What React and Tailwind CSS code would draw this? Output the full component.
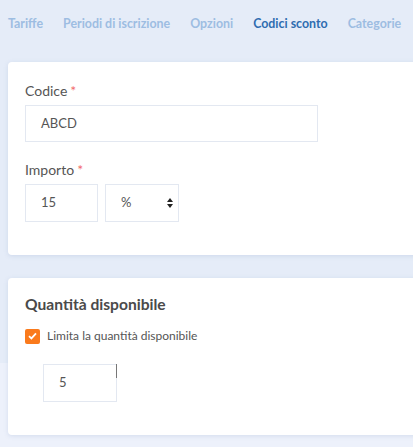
import React from "react";

const tabs = ["Tariffe", "Periodi di iscrizione", "Opzioni", "Codici sconto", "Categorie"];

function Label({ children }) {
  return (
    <div className="text-[14px] leading-5 text-[#555]">
      {children}
      <span className="text-[#f26b6b] ml-[3px]">*</span>
    </div>
  );
}

export default function App() {
  return (
    <div
      className="h-[447px] w-[413px] overflow-hidden bg-[linear-gradient(#e5ecf8_363px,#edf1fb_363px)]"
      style={{ fontFamily: "Lato, 'Noto Sans', sans-serif" }}
    >
      {/* tab bar */}
      <div className="flex items-center h-[48px] pl-[8px] gap-[20px] text-[12.4px] font-bold whitespace-nowrap">
        {tabs.map((t) => (
          <span key={t} className={t === "Codici sconto" ? "text-[#2f6cb0]" : "text-[#9dbde2]"}>
            {t}
          </span>
        ))}
      </div>

      {/* card Codice / Importo */}
      <div className="ml-[8px] mt-[14px] w-[430px] bg-white rounded-[4px] shadow-[0_1px_4px_rgba(140,160,200,0.25)] pl-[17px] pt-[19px] pb-[33px]">
        <Label>Codice</Label>
        <div className="mt-[4px] w-[293px] h-[37px] border border-[#e3e8f1] flex items-center pl-[15px] text-[13px] text-[#555]">
          ABCD
        </div>
        <div className="mt-[18px]">
          <Label>Importo</Label>
        </div>
        <div className="mt-[4px] flex gap-[7px]">
          <div className="w-[73px] h-[38px] border border-[#e3e8f1] flex items-center pl-[15px] text-[13px] text-[#555]">
            15
          </div>
          <div className="w-[74px] h-[38px] border border-[#e3e8f1] flex items-center justify-between pl-[15px] pr-[5px] text-[13px] text-[#555]">
            <span>%</span>
            <svg width="6" height="10" viewBox="0 0 6 10">
              <path d="M3 0L6 4H0Z" fill="#222" />
              <path d="M3 10L6 6H0Z" fill="#222" />
            </svg>
          </div>
        </div>
      </div>

      {/* card Quantità */}
      <div className="ml-[8px] mt-[23px] w-[430px] bg-white rounded-[4px] shadow-[0_1px_4px_rgba(140,160,200,0.25)] pl-[17px] pt-[15px] pb-[33px]">
        <div className="text-[15.6px] leading-[22px] font-bold text-[#4a4a4a]">Quantità disponibile</div>
        <div className="mt-[12px] flex items-center gap-[7px]">
          <span className="w-[15px] h-[15px] rounded-[2px] bg-[#fa7a1c] flex items-center justify-center">
            <svg width="9" height="8" viewBox="0 0 9 8">
              <path d="M1 4.2L3.4 6.4L8 1.4" stroke="white" strokeWidth="1.8" fill="none" />
            </svg>
          </span>
          <span className="text-[12px] text-[#555]">Limita la quantità disponibile</span>
        </div>
        <div className="mt-[19px] ml-[18px] relative w-[74px] h-[38px] border border-[#e3e8f1] flex items-center pl-[15px] text-[13px] text-[#555]">
          5
          <span className="absolute right-[-1px] top-[-1px] w-[1.5px] h-[14px] bg-[#777]" />
        </div>
      </div>
    </div>
  );
}
